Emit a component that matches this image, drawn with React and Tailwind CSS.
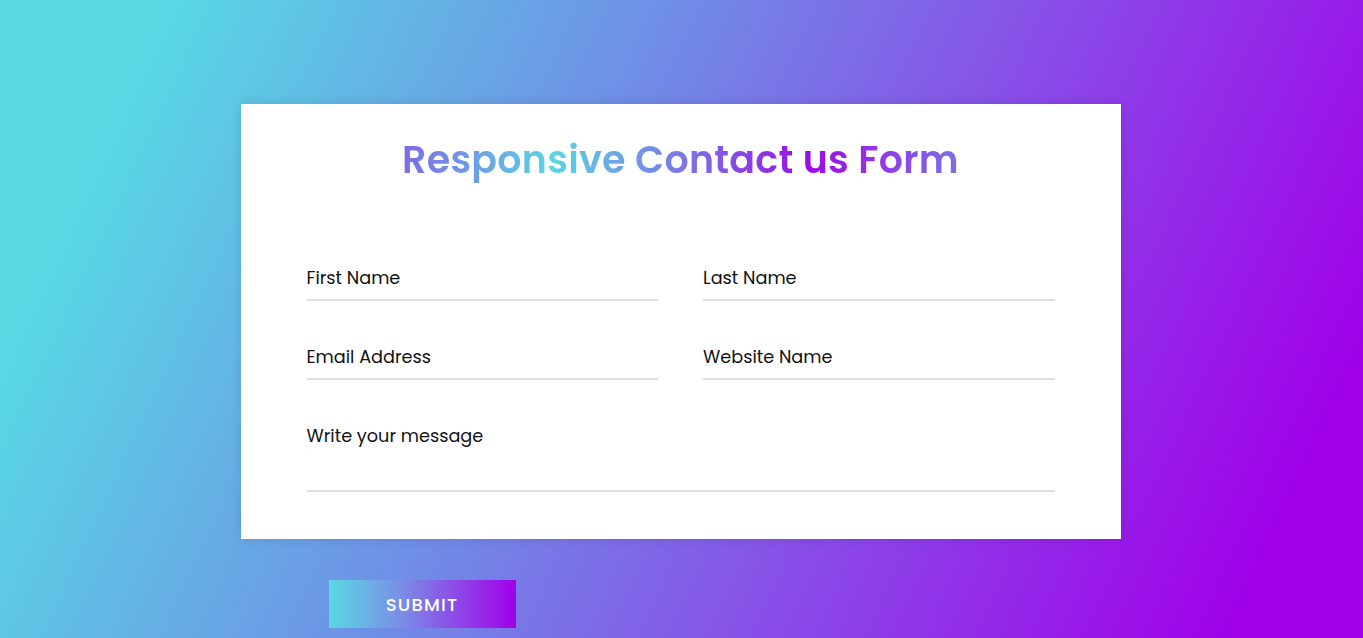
export default function App() {
  const font = { fontFamily: '"Poppins", "Inter", "Open Sans", sans-serif' };
  const Field = ({ label, extra = "" }) => (
    <div className={`border-b-2 border-[#dedede] pb-[9px] ${extra}`}>
      <div className="text-[17.7px] leading-[24px] text-[#111]">{label}</div>
    </div>
  );
  return (
    <div
      className="w-full h-[638px] overflow-hidden flex flex-col items-center pt-[104px] bg-[linear-gradient(115deg,#58d9e4_10%,#6f8fe6_40%,#8a4ae8_65%,#a000e8_92%)]"
      style={font}
    >
      <div className="w-[880px] -translate-x-[1px] flex flex-col">
        <div className="bg-white px-[66px] pt-[29px] pb-[47px] shadow-[0_0_10px_rgba(0,0,0,0.12)]">
          <div className="flex justify-center">
            <h1 className="text-[38px] leading-[54px] font-semibold tracking-[0.25px] bg-[linear-gradient(90deg,#7c6ce6_0%,#5bd5e4_27%,#7b78e6_50%,#9c0ce6_73%,#8e40e7_88%,#7a70e6_100%)] bg-clip-text text-transparent">
              Responsive Contact us Form
            </h1>
          </div>
          <div className="mt-[79px] grid grid-cols-2 gap-x-[45px] gap-y-[44px]">
            <Field label="First Name" />
            <Field label="Last Name" />
            <Field label="Email Address" />
            <Field label="Website Name" />
          </div>
          <div className="mt-[44px] border-b-2 border-[#dedede] h-[68px]">
            <div className="text-[17.7px] leading-[24px] text-[#111]">Write your message</div>
          </div>
        </div>
        <button className="mt-[41px] ml-[88px] w-[187px] h-[48px] bg-[linear-gradient(90deg,#5ad8e3_0%,#7b8ae6_40%,#8f45e7_70%,#a000e8_100%)] text-white text-[18px] font-medium tracking-[1.2px] flex items-center justify-center">
          SUBMIT
        </button>
      </div>
    </div>
  );
}
